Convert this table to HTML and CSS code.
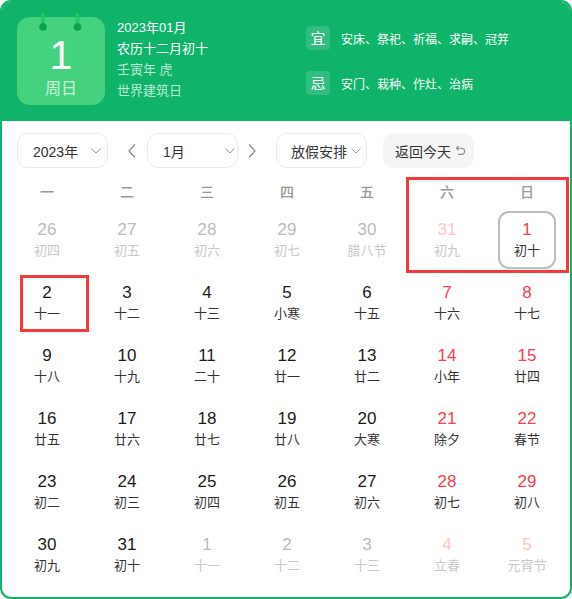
FILE: index.html
```html
<!DOCTYPE html>
<html lang="zh-CN">
<head>
<meta charset="utf-8">
<title>万年历</title>
<link rel="stylesheet" href="styles.css">
</head>
<body>
<div class="card">
  <div class="header">
    <div class="datebox">
      <svg class="rings" width="60" height="18" viewBox="0 0 60 18">
        <rect x="7" y="0" width="4" height="14" rx="2" fill="#22c866"/>
        <circle cx="9" cy="14" r="3.8" fill="#0b9f4e"/>
        <rect x="41.5" y="0" width="4" height="14" rx="2" fill="#22c866"/>
        <circle cx="43.5" cy="14" r="3.8" fill="#0b9f4e"/>
      </svg>
      <div class="bignum">1</div>
      <div class="week">周日</div>
    </div>
    <div class="info">
      <div class="line">2023年01月</div>
      <div class="line">农历十二月初十</div>
      <div class="line dim">壬寅年 虎</div>
      <div class="line dim">世界建筑日</div>
    </div>
    <div class="yiji">
      <div class="yj-row"><span class="tag">宜</span><span class="yj-text">安床、祭祀、祈福、求嗣、冠笄</span></div>
      <div class="yj-row"><span class="tag">忌</span><span class="yj-text">安门、栽种、作灶、治病</span></div>
    </div>
  </div>

  <div class="controls">
    <div class="select sel-year"><span>2023年</span>
      <svg class="chev" width="10" height="6" viewBox="0 0 10 6"><polyline points="0.5,0.5 5,5 9.5,0.5" fill="none" stroke="#999" stroke-width="1"/></svg>
    </div>
    <svg class="arrow arrow-l" width="8" height="14" viewBox="0 0 8 14"><polyline points="7,0.5 1,7 7,13.5" fill="none" stroke="#888" stroke-width="1.2"/></svg>
    <div class="select sel-month"><span>1月</span>
      <svg class="chev" width="10" height="6" viewBox="0 0 10 6"><polyline points="0.5,0.5 5,5 9.5,0.5" fill="none" stroke="#999" stroke-width="1"/></svg>
    </div>
    <svg class="arrow arrow-r" width="8" height="14" viewBox="0 0 8 14"><polyline points="1,0.5 7,7 1,13.5" fill="none" stroke="#888" stroke-width="1.2"/></svg>
    <div class="select sel-holiday"><span>放假安排</span>
      <svg class="chev" width="10" height="6" viewBox="0 0 10 6"><polyline points="0.5,0.5 5,5 9.5,0.5" fill="none" stroke="#999" stroke-width="1"/></svg>
    </div>
    <div class="today-btn"><span>返回今天</span>
      <svg class="back" width="11" height="11" viewBox="0 0 11 11"><path d="M1.5 3.2 H6.5 A3.1 3.1 0 0 1 6.5 9.4 H3" fill="none" stroke="#888" stroke-width="1.1"/><polyline points="3.6,1 1.5,3.2 3.6,5.4" fill="none" stroke="#888" stroke-width="1.1"/></svg>
    </div>
  </div>

  <div class="grid">
    <div class="wd">一</div><div class="wd">二</div><div class="wd">三</div><div class="wd">四</div><div class="wd">五</div><div class="wd">六</div><div class="wd">日</div>

    <div class="cell other"><div class="day"><span class="n">26</span><span class="l">初四</span></div></div>
    <div class="cell other"><div class="day"><span class="n">27</span><span class="l">初五</span></div></div>
    <div class="cell other"><div class="day"><span class="n">28</span><span class="l">初六</span></div></div>
    <div class="cell other"><div class="day"><span class="n">29</span><span class="l">初七</span></div></div>
    <div class="cell other"><div class="day"><span class="n">30</span><span class="l">腊八节</span></div></div>
    <div class="cell other wk"><div class="day"><span class="n">31</span><span class="l">初九</span></div></div>
    <div class="cell wk"><div class="day selected"><span class="n">1</span><span class="l">初十</span></div></div>

    <div class="cell"><div class="day"><span class="n">2</span><span class="l">十一</span></div></div>
    <div class="cell"><div class="day"><span class="n">3</span><span class="l">十二</span></div></div>
    <div class="cell"><div class="day"><span class="n">4</span><span class="l">十三</span></div></div>
    <div class="cell"><div class="day"><span class="n">5</span><span class="l">小寒</span></div></div>
    <div class="cell"><div class="day"><span class="n">6</span><span class="l">十五</span></div></div>
    <div class="cell wk"><div class="day"><span class="n">7</span><span class="l">十六</span></div></div>
    <div class="cell wk"><div class="day"><span class="n">8</span><span class="l">十七</span></div></div>

    <div class="cell"><div class="day"><span class="n">9</span><span class="l">十八</span></div></div>
    <div class="cell"><div class="day"><span class="n">10</span><span class="l">十九</span></div></div>
    <div class="cell"><div class="day"><span class="n">11</span><span class="l">二十</span></div></div>
    <div class="cell"><div class="day"><span class="n">12</span><span class="l">廿一</span></div></div>
    <div class="cell"><div class="day"><span class="n">13</span><span class="l">廿二</span></div></div>
    <div class="cell wk"><div class="day"><span class="n">14</span><span class="l">小年</span></div></div>
    <div class="cell wk"><div class="day"><span class="n">15</span><span class="l">廿四</span></div></div>

    <div class="cell"><div class="day"><span class="n">16</span><span class="l">廿五</span></div></div>
    <div class="cell"><div class="day"><span class="n">17</span><span class="l">廿六</span></div></div>
    <div class="cell"><div class="day"><span class="n">18</span><span class="l">廿七</span></div></div>
    <div class="cell"><div class="day"><span class="n">19</span><span class="l">廿八</span></div></div>
    <div class="cell"><div class="day"><span class="n">20</span><span class="l">大寒</span></div></div>
    <div class="cell wk"><div class="day"><span class="n">21</span><span class="l">除夕</span></div></div>
    <div class="cell wk"><div class="day"><span class="n">22</span><span class="l">春节</span></div></div>

    <div class="cell"><div class="day"><span class="n">23</span><span class="l">初二</span></div></div>
    <div class="cell"><div class="day"><span class="n">24</span><span class="l">初三</span></div></div>
    <div class="cell"><div class="day"><span class="n">25</span><span class="l">初四</span></div></div>
    <div class="cell"><div class="day"><span class="n">26</span><span class="l">初五</span></div></div>
    <div class="cell"><div class="day"><span class="n">27</span><span class="l">初六</span></div></div>
    <div class="cell wk"><div class="day"><span class="n">28</span><span class="l">初七</span></div></div>
    <div class="cell wk"><div class="day"><span class="n">29</span><span class="l">初八</span></div></div>

    <div class="cell"><div class="day"><span class="n">30</span><span class="l">初九</span></div></div>
    <div class="cell"><div class="day"><span class="n">31</span><span class="l">初十</span></div></div>
    <div class="cell other"><div class="day"><span class="n">1</span><span class="l">十一</span></div></div>
    <div class="cell other"><div class="day"><span class="n">2</span><span class="l">十二</span></div></div>
    <div class="cell other"><div class="day"><span class="n">3</span><span class="l">十三</span></div></div>
    <div class="cell other wk"><div class="day"><span class="n">4</span><span class="l">立春</span></div></div>
    <div class="cell other wk"><div class="day"><span class="n">5</span><span class="l">元宵节</span></div></div>
  </div>

  <div class="mark mark-weekend"></div>
  <div class="mark mark-day"></div>
</div>
</body>
</html>
```

FILE: styles.css
```css
* { box-sizing: border-box; }
html, body { margin: 0; padding: 0; background: #fff; }
body {
  font-family: "Liberation Sans", Arial, "Noto Sans CJK SC", sans-serif;
  width: 572px;
  height: 599px;
  overflow: hidden;
}
.card {
  position: relative;
  width: 572px;
  height: 599px;
  border: 2px solid #0fb36a;
  border-radius: 11px;
  overflow: hidden;
  background: #fff;
}
.header {
  height: 119px;
  background: #0fb36a;
  display: flex;
  align-items: flex-start;
  padding: 15px 0 0 15px;
  color: #fff;
}
.datebox {
  position: relative;
  width: 88px;
  height: 88px;
  flex: none;
  border-radius: 13px;
  background: #45d27f;
  display: flex;
  flex-direction: column;
  align-items: center;
  padding-top: 19px;
}
.rings {
  position: absolute;
  left: 17px;
  top: -4px;
}
.bignum {
  font-size: 41px;
  line-height: 38px;
  color: #fff;
}
.week {
  margin-top: 5px;
  font-size: 16px;
  line-height: 19px;
  color: rgba(255,255,255,0.72);
}
.info {
  width: 201px;
  flex: none;
  padding-left: 12px;
  font-size: 13px;
  line-height: 21px;
}
.info .line { white-space: nowrap; }
.info .dim { color: rgba(255,255,255,0.72); }
.yiji {
  flex: none;
  margin-top: 9px;
  display: flex;
  flex-direction: column;
  gap: 21px;
}
.yj-row {
  display: flex;
  align-items: center;
  height: 24px;
}
.tag {
  width: 24px;
  height: 24px;
  border-radius: 4px;
  background: rgba(255,255,255,0.14);
  font-family: "Noto Sans CJK SC", sans-serif;
  font-size: 15px;
  line-height: 24px;
  text-align: center;
  color: #fff;
}
.yj-text {
  margin-left: 11px;
  font-family: "Noto Sans CJK SC", sans-serif;
  font-size: 12px;
  color: #fff;
  white-space: nowrap;
}

.controls {
  display: flex;
  align-items: center;
  padding: 12px 0 0 15px;
  height: 47px;
}
.select, .today-btn {
  height: 35px;
  border-radius: 11px;
  display: flex;
  align-items: center;
  font-size: 14px;
  color: #333;
  flex: none;
}
.select { border: 1px solid #ebebeb; background: #fff; }
.sel-year { width: 91px; padding-left: 15px; }
.sel-year .chev { margin-left: 13px; }
.sel-month { width: 91px; padding-left: 15px; }
.sel-month .chev { margin-left: 40px; }
.sel-holiday { width: 91px; padding-left: 14px; margin-left: 20px; }
.sel-holiday .chev { margin-left: 4px; }
.arrow-l { margin-left: 20px; margin-right: 11px; }
.arrow-r { margin-left: 10px; }
.today-btn {
  width: 91px;
  margin-left: 16px;
  background: #f5f5f5;
  padding-left: 12px;
}
.today-btn .back { margin-left: 4px; }

.grid {
  margin: 5px 0 0 5px;
  width: 560px;
  display: grid;
  grid-template-columns: repeat(7, 80px);
  grid-template-rows: 36px repeat(6, 63px);
}
.wd {
  display: flex;
  align-items: center;
  justify-content: center;
  font-family: "Noto Sans CJK SC", sans-serif;
  font-size: 14px;
  color: #999;
  font-weight: 500;
}
.cell {
  display: flex;
  align-items: center;
  justify-content: center;
}
.day {
  width: 58px;
  height: 58px;
  border: 2px solid transparent;
  border-radius: 11px;
  display: flex;
  flex-direction: column;
  align-items: center;
  justify-content: center;
  margin-top: -2px;
}
.day.selected { border-color: #bdbdbd; }
.n {
  font-size: 17px;
  line-height: 20px;
  color: #1a1a1a;
}
.l {
  font-family: "Noto Sans CJK SC", sans-serif;
  font-size: 13px;
  line-height: 20px;
  color: #333;
}
.wk .n { color: #f8404f; }
.other .n { color: #bbb; }
.other .l { color: #c8c8c8; }
.other.wk .n { color: #ffc6c6; }

.mark {
  position: absolute;
  border: 3px solid #f53a3a;
}
.mark-weekend { left: 404px; top: 175px; width: 163px; height: 96px; }
.mark-day { left: 18px; top: 273px; width: 69px; height: 57px; }
```
